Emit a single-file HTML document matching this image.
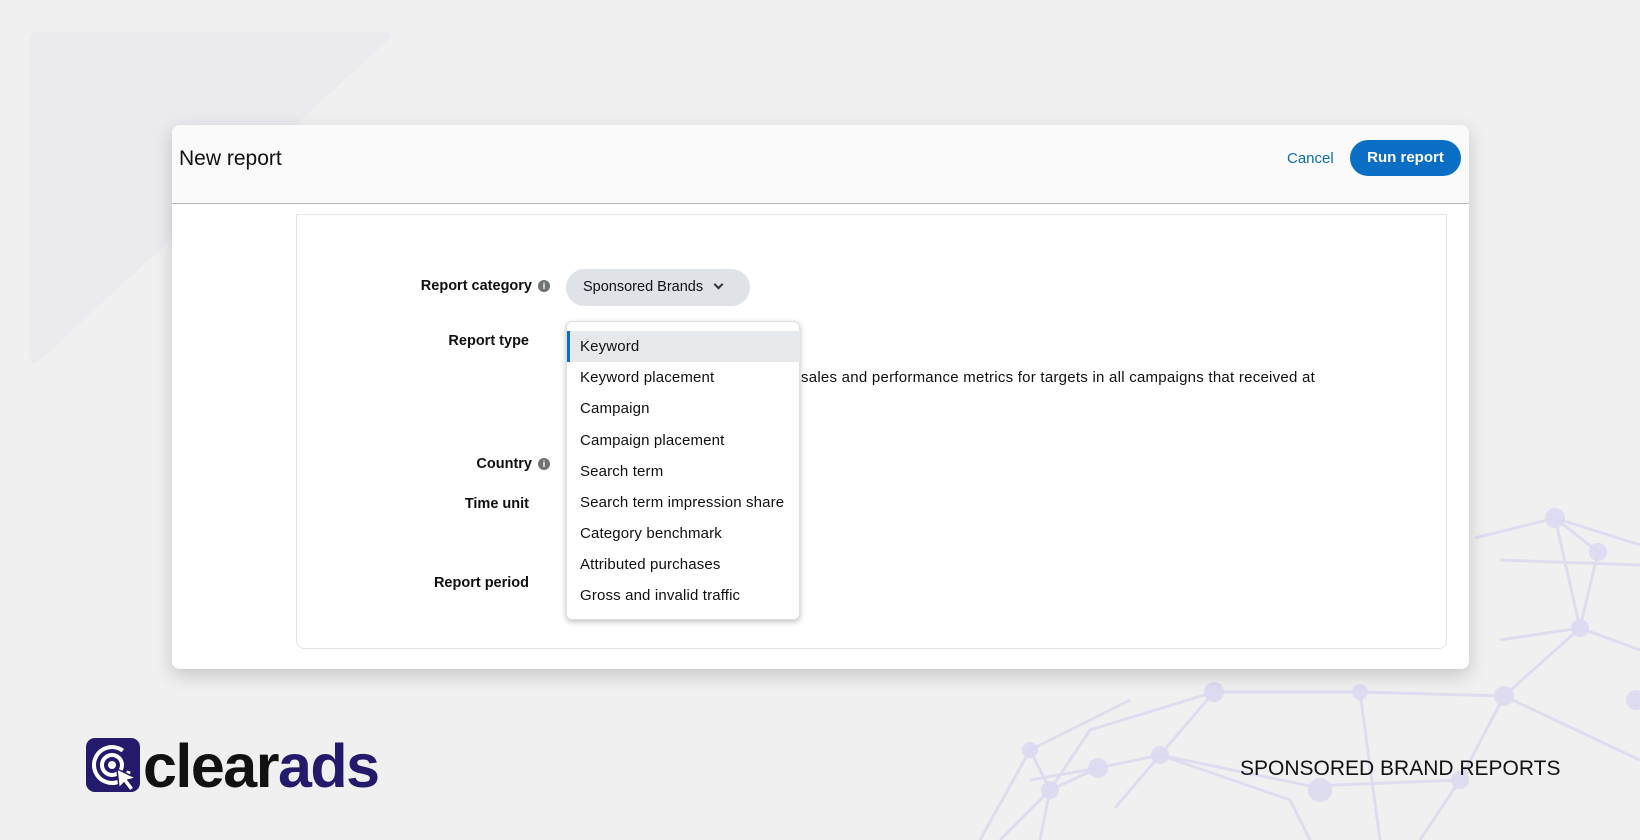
<!DOCTYPE html>
<html><head><meta charset="utf-8"><style>
*{margin:0;padding:0;box-sizing:border-box}
body{width:1640px;height:840px;background:#f0f0f0;position:relative;overflow:hidden;font-family:"Liberation Sans",sans-serif}
.abs{position:absolute}
.card{left:172px;top:125px;width:1297px;height:544px;background:#fff;border-radius:8px;box-shadow:0 6px 18px rgba(0,0,0,.18)}
.head{left:172px;top:125px;width:1297px;height:79px;background:#fafafa;border-radius:8px 8px 0 0;border-bottom:1px solid #b8b8b8}
.panel{left:296px;top:214px;width:1151px;height:435px;border:1px solid #e3e3e3;border-top:1px solid #e6e6e6;border-radius:0 0 8px 8px;background:#fff}
.lbl{font-size:14.5px;font-weight:bold;color:#0f1111;text-align:right;width:300px}
.info{display:inline-block;width:12px;height:12px;border-radius:50%;background:#6f7373;color:#fff;font-size:9px;line-height:12px;text-align:center;font-weight:bold;vertical-align:1px;margin-left:6px}
.dd{left:566px;top:321px;width:234px;height:299px;background:#fff;border-radius:6px;box-shadow:0 2px 6px rgba(0,0,0,.25);border:1px solid #e0e0e0}
.it{position:absolute;left:13px;font-size:15px;letter-spacing:0.15px;color:#0f1111}
</style></head><body>
<svg class="abs" style="left:0;top:0" width="1640" height="840">
<path d="M38,32 L384,32 Q396,32 388,40 L40,360 Q30,368 30,355 L30,40 Q30,32 38,32Z" fill="#ebebef"/>
<g stroke="#dcdaf0" stroke-width="3" fill="none" opacity=".85">
<polyline points="1555,518 1598,552 1580,628 1640,650"/>
<polyline points="1475,538 1555,518 1640,545"/>
<polyline points="1500,560 1640,565"/>
<polyline points="1500,640 1580,628 1504,696 1360,692 1214,692"/>
<polyline points="1555,518 1580,628"/>
<polyline points="1504,696 1460,780 1310,786 1160,755 1098,768 1030,780"/>
<polyline points="1214,692 1160,755 1115,808"/>
<polyline points="1504,696 1640,760"/>
<polyline points="1098,768 1050,790 1000,840"/>
<polyline points="1214,692 1090,730 1050,790"/>
<polyline points="1160,755 1290,800 1310,840"/>
<polyline points="1460,780 1420,840"/>
<polyline points="1030,750 1050,790 1040,840"/>
<polyline points="1130,700 1030,750 980,840"/>
<polyline points="1360,692 1380,840"/>
</g>
<g fill="#dcdaf0" opacity=".9">
<circle cx="1555" cy="518" r="10"/><circle cx="1598" cy="552" r="9"/><circle cx="1580" cy="628" r="9"/><circle cx="1504" cy="696" r="10"/><circle cx="1214" cy="692" r="10"/><circle cx="1160" cy="755" r="9"/><circle cx="1098" cy="768" r="10"/><circle cx="1030" cy="750" r="8"/><circle cx="1460" cy="780" r="9"/><circle cx="1320" cy="790" r="12"/><circle cx="1360" cy="692" r="8"/><circle cx="1050" cy="790" r="9"/><circle cx="1636" cy="700" r="10"/>
</g>
</svg>
<div class="abs card"></div>
<div class="abs head"></div>
<div class="abs" style="left:179px;top:147px;font-size:21px;color:#0f1111">New report</div>
<div class="abs" style="left:1287px;top:150px;font-size:15px;color:#0a6fb0">Cancel</div>
<div class="abs" style="left:1350px;top:140px;width:111px;height:36px;border-radius:18px;background:#0a6fc4;color:#fff;font-size:15px;font-weight:bold;text-align:center;line-height:36px">Run report</div>
<div class="abs panel"></div>
<div class="abs lbl" style="left:250px;top:278px">Report category<span class="info">i</span></div>
<div class="abs" style="left:566px;top:269px;width:184px;height:37px;border-radius:19px;background:#dfe2e6;font-size:14.5px;color:#0f1111;line-height:37px;padding-left:17px">Sponsored Brands <span style="display:inline-block;width:7px;height:7px;border-right:2px solid #333;border-bottom:2px solid #333;transform:rotate(45deg);margin-left:8px;vertical-align:3px"></span></div>
<div class="abs lbl" style="left:229px;top:333px">Report type</div>
<div class="abs lbl" style="left:250px;top:456px">Country<span class="info">i</span></div>
<div class="abs lbl" style="left:229px;top:496px">Time unit</div>
<div class="abs lbl" style="left:229px;top:575px">Report period</div>
<div class="abs" style="left:801px;top:369px;font-size:15px;letter-spacing:0.25px;color:#0f1111">sales and performance metrics for targets in all campaigns that received at</div>
<div class="abs dd">
<div style="position:absolute;left:0;top:9px;width:233px;height:31px;background:#e6e9ec;border-left:3px solid #0a6fc4"></div>
<div class="it" style="top:16px">Keyword</div>
<div class="it" style="top:47px">Keyword placement</div>
<div class="it" style="top:78px">Campaign</div>
<div class="it" style="top:110px">Campaign placement</div>
<div class="it" style="top:141px">Search term</div>
<div class="it" style="top:172px">Search term impression share</div>
<div class="it" style="top:203px">Category benchmark</div>
<div class="it" style="top:234px">Attributed purchases</div>
<div class="it" style="top:265px">Gross and invalid traffic</div>
</div>
<svg class="abs" style="left:86px;top:738px" width="54" height="55" viewBox="0 0 54 55">
<rect x="0" y="0" width="54" height="54" rx="9" fill="#241a6b"/>
<circle cx="26" cy="27" r="18" fill="none" stroke="#fff" stroke-width="4" stroke-dasharray="90 24" transform="rotate(20 26 27)"/>
<circle cx="26" cy="27" r="10" fill="none" stroke="#fff" stroke-width="4"/>
<circle cx="26" cy="27" r="4" fill="#fff"/>
<polygon points="31,31 50,40 42,42 48,50 44,53 38,45 33,50" fill="#fff" stroke="#241a6b" stroke-width="1.5"/>
</svg>
<div class="abs" style="left:143px;top:731px;font-size:61px;font-weight:bold;letter-spacing:-1.5px;line-height:70px"><span style="color:#111">clear</span><span style="color:#241a6b">ads</span></div>
<div class="abs" style="left:1240px;top:757px;font-size:21px;color:#111">SPONSORED BRAND REPORTS</div>
</body></html>
